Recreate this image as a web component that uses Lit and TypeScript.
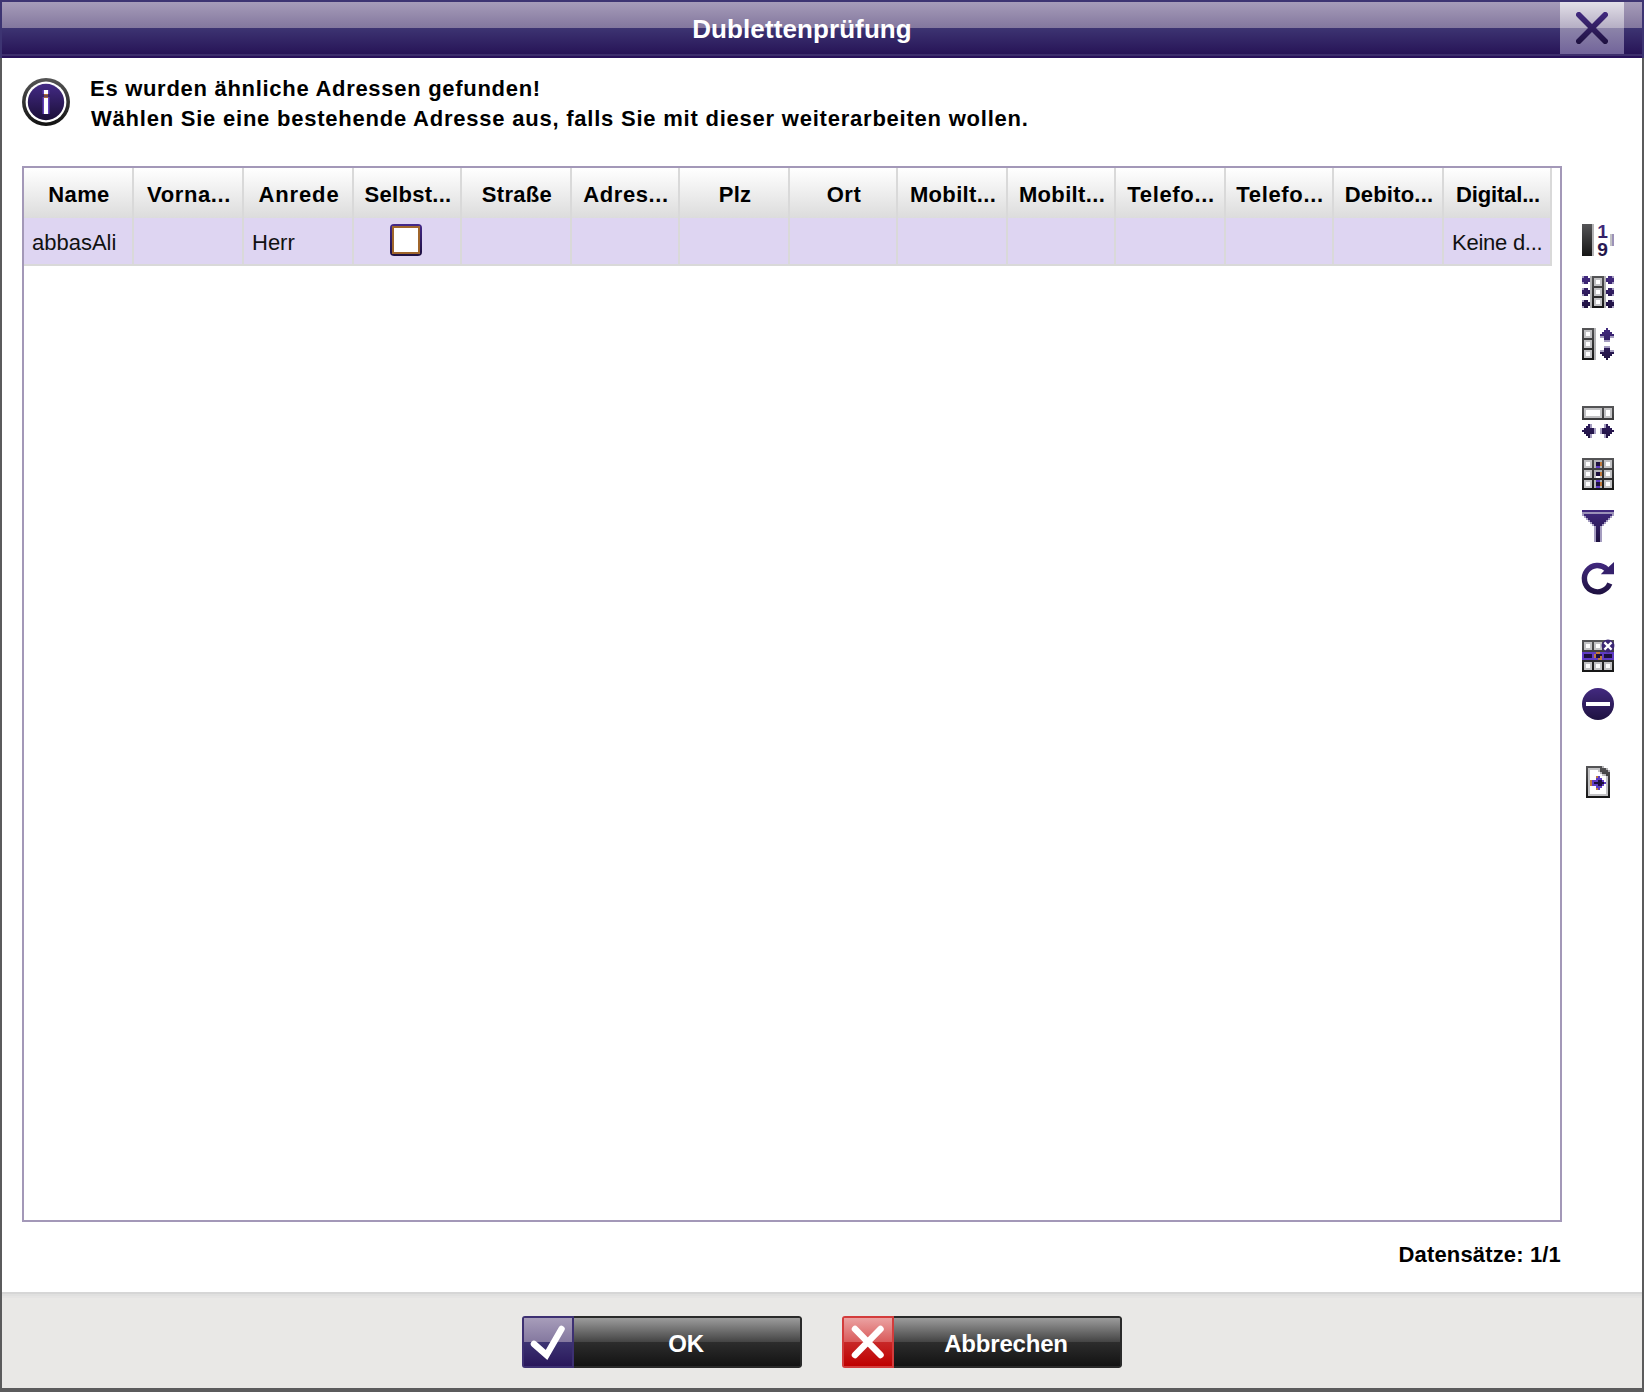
import { LitElement, html, svg, css, type TemplateResult } from "lit";
import { customElement, property } from "lit/decorators.js";
import { styleMap } from "lit/directives/style-map.js";

/* Paint for each letter of a 16 x 16 icon map. */
const PAINT: Record<string, string> = {
  "#": "url(#ink)",
  p: "url(#violet)",
  m: "#a59dc0",
  l: "#9c92b8",
  g: "#b4b4b6",
  c: "#c2c2c4",
  w: "#ffffff",
  v: "#5f3cc4",
  d: "#1c0f3e",
  o: "#c07a3c",
};

const film = (pad: (row: number) => [string, string], strip: [string, string, string]) =>
  Array.from({ length: 16 }, (_, y) => {
    const k = y % 5;
    const [l, r] = pad(y);
    return l + (k === 0 ? strip[0] : k === 1 || k === 4 ? strip[1] : strip[2]) + r;
  });

const sideArrows = ["mpp.", "pppp", "pppp", "mpp."];
const flip = (s: string) => [...s].reverse().join("");
const sideArrow = (y: number): [string, string] => {
  const k = y % 6;
  return k < 4 ? [sideArrows[k], flip(sideArrows[k])] : ["....", "...."];
};

const up = ["...p...", "..ppp..", ".ppppp.", "ppppppp", "mmpppmm", "..ppp..", "..mmm.."];
const upDown = [...up, ".......", ".......", ...[...up].reverse()];

const bar = "#####g..........";

const MAPS: Record<string, string[]> = {
  numbering: [
    bar, bar, bar, bar, bar,
    "#####g........cl",
    "#####g........cl",
    "#####g........cl",
    "#####g........cl",
    "#####g........cl",
    "#####g........cl",
    bar, bar, bar, bar, bar,
  ],
  widen: film(sideArrow, ["g######g", "g#cccc#g", "g#cwwc#g"]),
  rows: film((y) => ["", ".." + upDown[y]], ["######g", "#cccc#g", "#cwwc#g"]),
  columns: [
    "################",
    "#ccccccccc#cccc#",
    "#cwwwwwwwc#cwwc#",
    "#cwwwwwwwc#cwwc#",
    "#cwwwwwwwc#cwwc#",
    "#ccccccccc#cccc#",
    "################",
    "................",
    "................",
    "...pm......mp...",
    "..ppm......mpp..",
    ".pppppm..mppppp.",
    "ppppppm..mpppppp",
    ".pppppm..mppppp.",
    "..ppm......mpp..",
    "...pm......mp...",
  ],
  pickColumn: [
    "################",
    "#cccc#gggg#cccc#",
    "#cwwc#gddo#cwwc#",
    "#cwwc#gddo#cwwc#",
    "#cccc#gvvg#cccc#",
    "################",
    "#cccc#gggg#cccc#",
    "#cwwc#gddo#cwwc#",
    "#cwwc#gddo#cwwc#",
    "#cccc#cwwc#cccc#",
    "################",
    "#cccc#gvvg#cccc#",
    "#cwwc#gddo#cwwc#",
    "#cwwc#gddo#cwwc#",
    "#cccc#gvvg#cccc#",
    "################",
  ],
  filter: [
    "pppppppppppppppp",
    "llllllllllllllll",
    "mppppppppppppppm",
    ".mppppppppppppm.",
    "..mppppppppppm..",
    "...mppppppppm...",
    "....mppppppm....",
    ".....mppppm.....",
    "......mppm......",
    "......mppm......",
    "......mppm......",
    "......mppm......",
    "......mppm......",
    "......mppm......",
    "......mppm......",
    "......mppm......",
  ],
  clearRow: [
    "################",
    "#cccc#cccc#cccc#",
    "#cwwc#cwwc#cwwc#",
    "#cwwc#cwwc#cwwc#",
    "#cccc#cccc#cccc#",
    "################",
    "vvvvvvvoovvvvvvv",
    "vddddvodddvddddv",
    "vddddvoddovddddv",
    "vvvvvvvvoovvvvvv",
    "################",
    "#cccc#cccc#cccc#",
    "#cwwc#cwwc#cwwc#",
    "#cwwc#cwwc#cwwc#",
    "#cccc#cccc#cccc#",
    "################",
  ],
  export: [
    "..########g.....",
    "..#cccccc###g...",
    "..#cwwwwc####g..",
    "..#cwwwwwg####..",
    "..#cwwwwwwcg##..",
    "..#cwwwovwwwc#..",
    "..#cwwwvvvwwc#..",
    "..#covvvddvwc#..",
    "..#covdddddvc#..",
    "..#covvvddvwc#..",
    "..#cwwwvvvwwc#..",
    "..#cwwwovwwwc#..",
    "..#cwwwwwwwwc#..",
    "..#cwwwwwwwwc#..",
    "..#cccccccccc#..",
    "..############..",
  ],
};

const drawMap = (rows: string[]): TemplateResult[] => {
  const out: TemplateResult[] = [];
  rows.forEach((row, y) => {
    let x = 0;
    while (x < row.length) {
      let end = x + 1;
      while (end < row.length && row[end] === row[x]) end++;
      if (row[x] !== ".")
        out.push(svg`<rect x=${x} y=${y} width=${end - x} height="1" fill=${PAINT[row[x]]} shape-rendering="crispEdges"></rect>` as TemplateResult);
      x = end;
    }
  });
  return out;
};

const SHAPES: Record<string, TemplateResult> = {
  refresh: svg`
    <path d="M12.4 3.6A6.6 6.6 0 1 0 13.9 10.8" fill="none" stroke="url(#violet)" stroke-width="2.7"></path>
    <path d="M16 0V6.1H9.4L11.2 4.2L13.4 2.4Z" fill="#35206c"></path>` as TemplateResult,
  remove: svg`
    <circle cx="8" cy="8" r="8" fill="url(#violet)"></circle>
    <rect x="2" y="7" width="12" height="2" fill="#fff"></rect>` as TemplateResult,
};

/* Details laid over an icon map. */
const OVERLAYS: Record<string, TemplateResult> = {
  numbering: svg`
    <text class="digit" x="7.6" y="7">1</text>
    <text class="digit" x="7.6" y="16">9</text>` as TemplateResult,
  clearRow: svg`
    <circle cx="13" cy="3" r="3.2" fill="#3b2674"></circle>
    <path d="M11.2 1.2L14.8 4.8M14.8 1.2L11.2 4.8" stroke="#fff" stroke-width="1.1"></path>` as TemplateResult,
};

@customElement("tool-icon")
class ToolIcon extends LitElement {
  static styles = css`
    :host { display: block; width: 32px; height: 32px; }
    svg { display: block; overflow: visible; }
    .digit { font: bold 9.6px "Liberation Sans", Arial, sans-serif; fill: url(#violet); }
  `;
  @property() name = "";
  render() {
    return html`<svg width="32" height="32" viewBox="0 0 16 16">
      <defs>
        <linearGradient id="ink" gradientUnits="userSpaceOnUse" x1="0" y1="0" x2="0" y2="16">
          <stop offset="0" stop-color="#555557"></stop><stop offset="1" stop-color="#151515"></stop>
        </linearGradient>
        <linearGradient id="violet" gradientUnits="userSpaceOnUse" x1="0" y1="0" x2="0" y2="16">
          <stop offset="0" stop-color="#432a80"></stop><stop offset="1" stop-color="#1e1140"></stop>
        </linearGradient>
      </defs>
      ${SHAPES[this.name] ?? drawMap(MAPS[this.name] ?? [])}
      ${OVERLAYS[this.name] ?? ""}
    </svg>`;
  }
}

@customElement("dialog-button")
class DialogButton extends LitElement {
  static styles = css`
    :host { display: block; }
    .btn { display: flex; width: 280px; height: 52px; border-radius: 3px; overflow: hidden; }
    .mark { box-sizing: border-box; width: 52px; height: 52px; border: 2px solid; }
    .mark svg { display: block; margin: -2px; }
    .ok { border-color: #3d3072; background: linear-gradient(#a79dba 0, #84789f 50%, #3d3472 50%, #29175b 100%); }
    .cancel { border-color: #d33c3c; background: linear-gradient(#eba2a2 0, #d95a5a 50%, #c82828 50%, #bf0000 100%); }
    .label {
      box-sizing: border-box; flex: 1; height: 52px; padding: 1px 2px 0 0; text-align: center;
      border: 2px solid #2a2a2a; border-left: 0;
      border-radius: 0 3px 3px 0;
      background: linear-gradient(#9c9c9c 0, #444 50%, #2d2d2d 50%, #131313 100%);
      color: #fff; font: bold 24px/49px "Liberation Sans", Arial, sans-serif; letter-spacing: -0.2px;
    }
  `;
  @property() kind = "ok";
  @property() label = "";
  render() {
    const d = this.kind === "ok" ? "M12 28L24.5 39L39.5 13" : "M13 13L38.5 39M38.5 13L13 39";
    return html`<div class="btn">
      <div class="mark ${this.kind}">
        <svg width="52" height="52" viewBox="0 0 52 52">
          <path d=${d} fill="none" stroke="#fff" stroke-width="6.5" stroke-linecap="round"></path>
        </svg>
      </div>
      <div class="label">${this.label}</div>
    </div>`;
  }
}

interface Column { title: string; value?: string; check?: boolean; width: number; track: number; }

const COLUMNS: Column[] = [
  { title: "Name", value: "abbasAli", width: 110, track: 0.4 },
  { title: "Vorna...", width: 110, track: 0.6 },
  { title: "Anrede", value: "Herr", width: 110, track: 0.9 },
  { title: "Selbst...", check: true, width: 108, track: 0.3 },
  { title: "Straße", width: 110, track: 0.3 },
  { title: "Adres...", width: 108, track: 0.6 },
  { title: "Plz", width: 110, track: 0.2 },
  { title: "Ort", width: 108, track: 0.5 },
  { title: "Mobilt...", width: 110, track: 0.35 },
  { title: "Mobilt...", width: 108, track: 0.35 },
  { title: "Telefo...", width: 110, track: 0.65 },
  { title: "Telefo...", width: 108, track: 0.65 },
  { title: "Debito...", width: 110, track: 0.2 },
  { title: "Digital...", value: "Keine d...", width: 108, track: -0.15 },
];

/* Toolbar entries with the free space above each of them. */
const TOOLS: [string, number][] = [
  ["numbering", 0], ["widen", 20], ["rows", 20],
  ["columns", 46], ["pickColumn", 20], ["filter", 20], ["refresh", 20],
  ["clearRow", 46], ["remove", 16], ["export", 46],
];

@customElement("app-root")
class AppRoot extends LitElement {
  static styles = css`
    :host { display: block; font-family: "Liberation Sans", Arial, sans-serif; color: #000; }
    .window { box-sizing: border-box; width: 1644px; height: 1392px; display: flex; flex-direction: column; background: #fff; }
    .bar {
      box-sizing: border-box; height: 58px; display: flex; border: 2px solid #3d3472; border-bottom: 0; padding-right: 18px;
      background: linear-gradient(#a69cb9 0, #83779e 26px, #3d3472 26px, #271457 52px, #3d2e6c 52px, #3d2e6c 54px, #28115a 54px);
    }
    .title { flex: 1; box-sizing: border-box; padding: 12px 0 0 42px; text-align: center; color: #fff; font-weight: bold; font-size: 26px; line-height: 30px; letter-spacing: 0.1px; }
    .close { width: 64px; height: 52px; display: flex; justify-content: center; padding-top: 10px; box-sizing: border-box; background: linear-gradient(#e3e0e8 0, #b5aec4 26px, #8c84a9 26px, #72649a 52px); }
    .close svg { display: block; }
    .body { flex: 1; min-height: 0; box-sizing: border-box; border: solid #5b5b5c; border-width: 0 2px; display: flex; flex-direction: column; }
    .notice { display: flex; padding: 16px 0 0 20px; height: 92px; }
    .notice svg { display: block; margin-top: 4px; }
    .lines { padding-left: 20px; font-weight: bold; font-size: 22px; line-height: 30px; letter-spacing: 0.71px; white-space: nowrap; }
    .second { padding-left: 1px; letter-spacing: 0.775px; }
    .main { display: flex; }
    .grid { box-sizing: border-box; margin-left: 20px; width: 1540px; height: 1056px; border: 2px solid #a398b8; }
    .row { display: flex; }
    .cell { box-sizing: border-box; border-right: 2px solid #d9d9d9; white-space: nowrap; }
    .head { height: 50px; padding: 3px 0 0 2px; line-height: 47px; font-size: 22px; font-weight: bold; text-align: center; background: linear-gradient(#fff, #dcdcdc); }
    .data { height: 48px; padding: 3px 0 0 8px; line-height: 43px; font-size: 22px; border-bottom: 2px solid #d9d9d9; background: #ded5f2; color: #111; }
    .data:last-child { letter-spacing: -0.25px; }
    .checkcell { display: flex; justify-content: center; padding: 6px 2px 0 0; }
    .check { box-sizing: border-box; width: 32px; height: 32px; padding: 2px; border-radius: 4px; background: linear-gradient(#45298a, #1e1140); }
    .check i { display: block; box-sizing: border-box; width: 28px; height: 28px; border: 2px solid #a0662b; background: #fff; }
    .tools { padding: 58px 0 0 20px; display: flex; flex-direction: column; }
    .count { width: 1559px; margin-top: 20px; text-align: right; font-weight: bold; font-size: 22px; line-height: 25px; letter-spacing: 0.15px; }
    .footer { box-sizing: border-box; height: 100px; border: solid #5b5b5c; border-width: 0 2px 4px; background: linear-gradient(#d6d6d6 0 2px, #e0e0df 2px 4px, #e5e4e3 4px 6px, #e9e8e6 6px); padding-top: 24px; display: flex; justify-content: center; gap: 40px; }
  `;

  render() {
    return html`
      <div class="window">
        <div class="bar">
          <div class="title">Dublettenprüfung</div>
          <div class="close">
            <svg width="32" height="32" viewBox="0 0 32 32">
              <defs><linearGradient id="x" gradientUnits="userSpaceOnUse" x1="0" y1="0" x2="0" y2="32">
                <stop offset="0" stop-color="#432a80"></stop><stop offset="1" stop-color="#1e1140"></stop>
              </linearGradient></defs>
              <path d="M2.8 2.8L29.2 29.2M29.2 2.8L2.8 29.2" fill="none" stroke="url(#x)" stroke-width="5.6" stroke-linecap="round"></path>
            </svg>
          </div>
        </div>
        <div class="body">
          <div class="notice">
            <svg width="48" height="48" viewBox="0 0 48 48">
              <defs>
                <linearGradient id="ring" x1="0" y1="0" x2="0" y2="1"><stop offset="0" stop-color="#555"></stop><stop offset="1" stop-color="#111"></stop></linearGradient>
                <linearGradient id="disc" x1="0" y1="0" x2="0" y2="1"><stop offset="0" stop-color="#432a85"></stop><stop offset="1" stop-color="#1b0f38"></stop></linearGradient>
              </defs>
              <circle cx="24" cy="24" r="24" fill="url(#ring)"></circle>
              <circle cx="24" cy="24" r="20.4" fill="#fff"></circle>
              <circle cx="24" cy="24" r="18.2" fill="url(#disc)"></circle>
              <rect x="20.5" y="19" width="7" height="17" fill="#6240b8"></rect>
              <rect x="22" y="20" width="4" height="16" fill="#fff"></rect>
              <rect x="20.5" y="12" width="7" height="4" fill="#6240b8"></rect>
              <rect x="22" y="12" width="4" height="4" fill="#fff"></rect>
              <rect x="22" y="16" width="4" height="1.5" fill="#b07038"></rect>
              <rect x="22" y="18.5" width="4" height="1.5" fill="#b07038"></rect>
            </svg>
            <div class="lines">
              <div>Es wurden ähnliche Adressen gefunden!</div>
              <div class="second">Wählen Sie eine bestehende Adresse aus, falls Sie mit dieser weiterarbeiten wollen.</div>
            </div>
          </div>
          <div class="main">
            <div class="grid">
              <div class="row">
                ${COLUMNS.map((c) => html`<div class="cell head" style=${styleMap({ width: `${c.width}px`, letterSpacing: `${c.track}px` })}>${c.title}</div>`)}
              </div>
              <div class="row">
                ${COLUMNS.map((c) => html`<div class="cell data ${c.check ? "checkcell" : ""}" style=${styleMap({ width: `${c.width}px` })}>${c.check ? html`<span class="check"><i></i></span>` : c.value ?? ""}</div>`)}
              </div>
            </div>
            <div class="tools">
              ${TOOLS.map(([name, gap]) => html`<tool-icon name=${name} style=${styleMap({ marginTop: `${gap}px` })}></tool-icon>`)}
            </div>
          </div>
          <div class="count">Datensätze: 1/1</div>
        </div>
        <div class="footer">
          <dialog-button kind="ok" label="OK"></dialog-button>
          <dialog-button kind="cancel" label="Abbrechen"></dialog-button>
        </div>
      </div>
    `;
  }
}
